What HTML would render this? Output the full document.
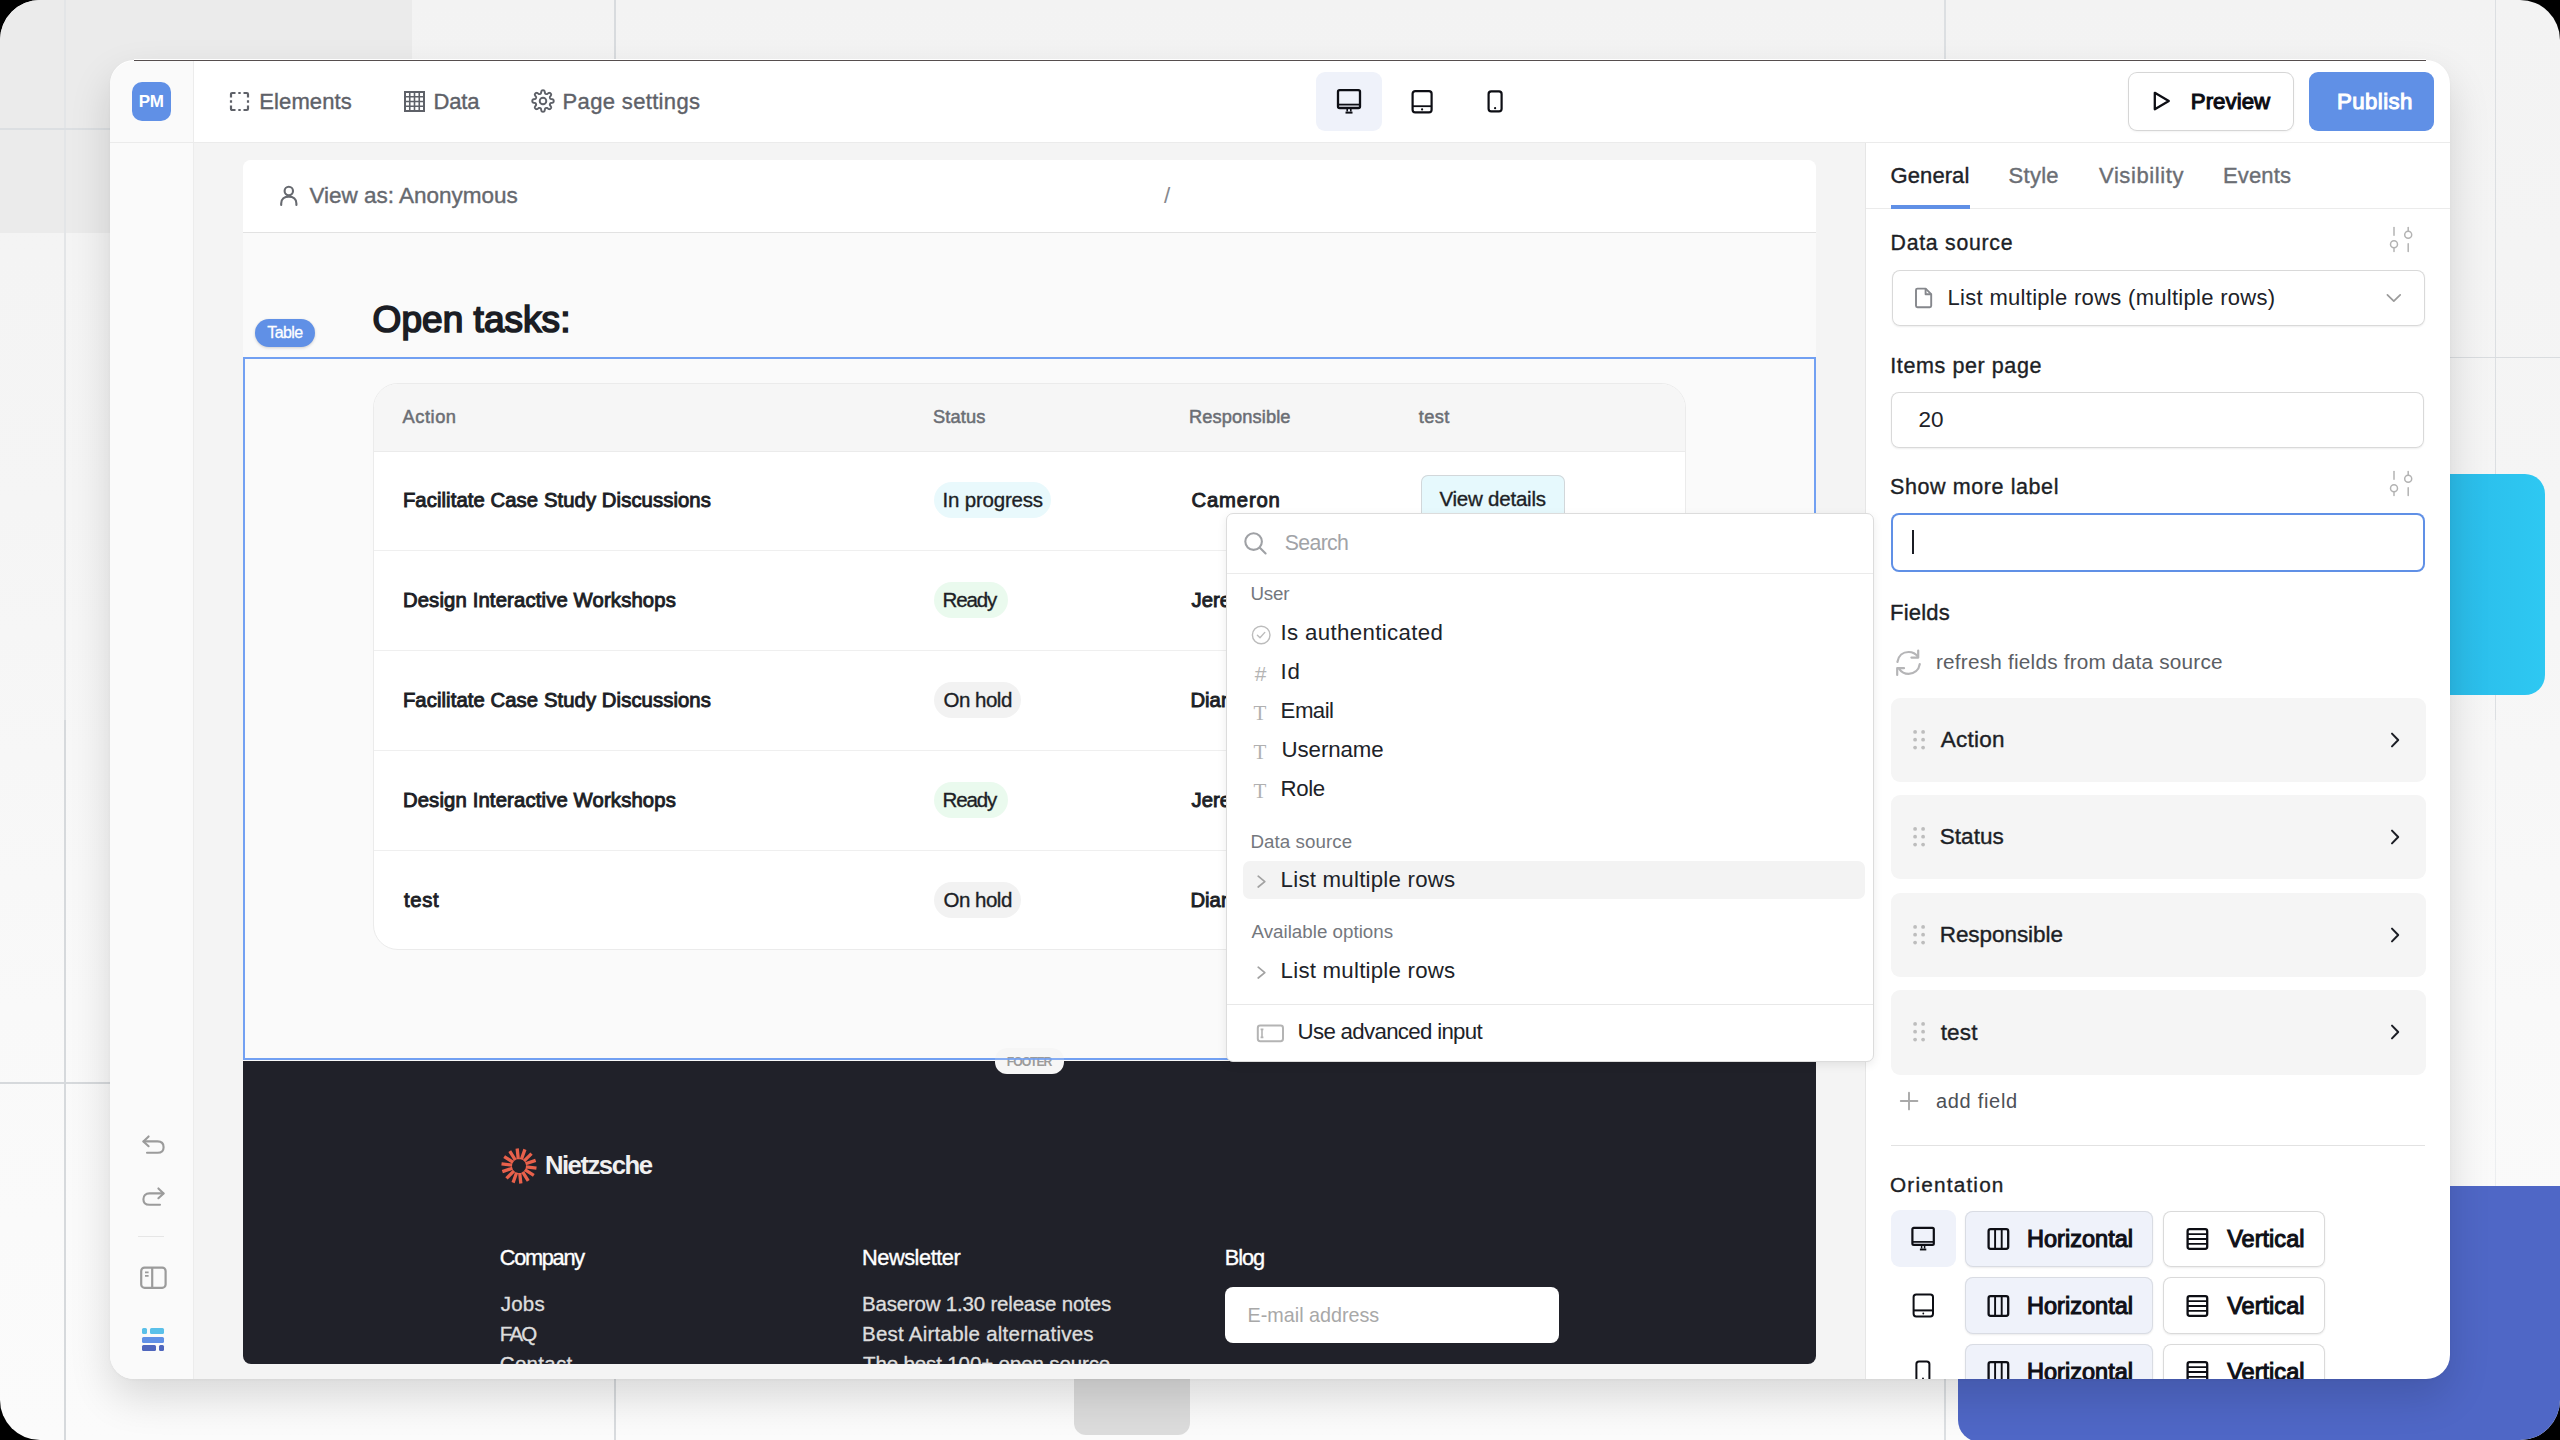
<!DOCTYPE html>
<html><head><meta charset="utf-8"><title>Page editor</title>
<style>html,body{margin:0;padding:0;width:2560px;height:1440px;overflow:hidden;background:#000;font-family:"Liberation Sans",sans-serif;}
#root{position:relative;width:2560px;height:1440px;overflow:hidden;border-radius:40px;}</style></head>
<body><div id="root">
<div style="position:absolute;left:0.00px;top:0.00px;width:2560.00px;height:1440.00px;background:linear-gradient(180deg,#f3f3f3 0%,#f5f5f5 35%,#f9f9f9 70%,#fbfbfb 100%);"></div>
<div style="position:absolute;left:0.00px;top:0.00px;width:412.00px;height:233.00px;background:#ebebeb;"></div>
<div style="position:absolute;left:64.00px;top:0.00px;width:1.50px;height:720.00px;background:#e3e5e7;"></div>
<div style="position:absolute;left:64.00px;top:720.00px;width:1.50px;height:720.00px;background:#d6d9dc;"></div>
<div style="position:absolute;left:614.00px;top:0.00px;width:1.50px;height:1440.00px;background:#d8dbde;"></div>
<div style="position:absolute;left:1944.00px;top:0.00px;width:1.50px;height:1440.00px;background:#dcdfe2;"></div>
<div style="position:absolute;left:2494.50px;top:0.00px;width:1.50px;height:720.00px;background:#dcdfe2;"></div>
<div style="position:absolute;left:2494.50px;top:720.00px;width:1.50px;height:466.00px;background:#eceef0;"></div>
<div style="position:absolute;left:0.00px;top:128.00px;width:412.00px;height:1.50px;background:#dcdfe2;"></div>
<div style="position:absolute;left:0.00px;top:1082.00px;width:412.00px;height:1.50px;background:#d6d9dc;"></div>
<div style="position:absolute;left:2400.00px;top:356.50px;width:160.00px;height:1.50px;background:#d9dcdf;"></div>
<div style="position:absolute;left:2380.00px;top:474.00px;width:165.00px;height:221.00px;background:linear-gradient(90deg,#22a9df,#2bbdea 45%,#2ec8f2);border-radius:20px;"></div>
<div style="position:absolute;left:1958.00px;top:1186.00px;width:642.00px;height:256.00px;background:#4f67c6;border-radius:0 0 0 22px;"></div>
<div style="position:absolute;left:1074.00px;top:1300.00px;width:116.00px;height:135.00px;background:#dcdcdc;border-radius:12px;"></div>
<div style="position:absolute;left:110.00px;top:60.00px;width:2340.00px;height:1319.00px;border-radius:24px;background:#fff;box-shadow:0 18px 42px rgba(0,0,0,0.14),0 1px 3px rgba(0,0,0,0.04);overflow:hidden;">
</div>
<div style="position:absolute;left:134.00px;top:59.00px;width:2292.00px;height:1.00px;background:#ffffff;"></div>
<div style="position:absolute;left:134.00px;top:60.00px;width:2292.00px;height:1.00px;background:#564e4e;"></div>
<div style="position:absolute;left:110px;top:61px;width:83px;height:1318px;background:#fafafa;border-radius:24px 0 0 24px;"></div>
<div style="position:absolute;left:193.00px;top:61.00px;width:1.00px;height:1318.00px;background:#ececec;"></div>
<div style="position:absolute;left:110.00px;top:142.00px;width:2340.00px;height:1.00px;background:#ebebeb;"></div>
<div style="position:absolute;left:194.00px;top:143.00px;width:1671.00px;height:1236.00px;background:#f4f4f4;"></div>
<div style="position:absolute;left:1865.00px;top:143.00px;width:1.00px;height:1236.00px;background:#e6e6e6;"></div>
<div style="position:absolute;left:132.00px;top:82.00px;width:39.00px;height:39.00px;background:#6090e6;border-radius:10px;"></div>
<div style="position:absolute;left:138.70px;top:93.45px;font-family:'Liberation Sans',sans-serif;font-size:17.0px;line-height:17.0px;font-weight:700;color:#fff;white-space:pre;letter-spacing:-0.400px;">PM</div>
<svg style="position:absolute;left:229.00px;top:91.00px;" width="21.00" height="21.00" viewBox="0 0 21.00 21.00" fill="none"><g stroke="#5e6168" stroke-width="2.2" stroke-linecap="butt"><path d="M2,6.5V3.2Q2,2 3.2,2H6.5"/><path d="M14.5,2H17.8Q19,2 19,3.2V6.5"/><path d="M19,14.5V17.8Q19,19 17.8,19H14.5"/><path d="M6.5,19H3.2Q2,19 2,17.8V14.5"/><path d="M9.3,2H11.7"/><path d="M9.3,19H11.7"/><path d="M2,9.3V11.7"/><path d="M19,9.3V11.7"/></g></svg>
<div style="position:absolute;left:259.30px;top:90.70px;font-family:'Liberation Sans',sans-serif;font-size:22.0px;line-height:22.0px;font-weight:400;color:#5e6168;white-space:pre;letter-spacing:0.100px;-webkit-text-stroke:0.374px #5e6168;">Elements</div>
<svg style="position:absolute;left:403.00px;top:90.00px;" width="23.00" height="23.00" viewBox="0 0 23.00 23.00" fill="none"><g stroke="#5e6168" stroke-width="2"><rect x="2" y="2" width="19" height="19"/><path d="M6.75,2V21M11.5,2V21M16.25,2V21M2,6.75H21M2,11.5H21M2,16.25H21" stroke-width="1.6"/></g></svg>
<div style="position:absolute;left:433.60px;top:90.70px;font-family:'Liberation Sans',sans-serif;font-size:22.0px;line-height:22.0px;font-weight:400;color:#5e6168;white-space:pre;letter-spacing:-0.200px;-webkit-text-stroke:0.374px #5e6168;">Data</div>
<svg style="position:absolute;left:530.00px;top:88.00px;" width="26.00" height="26.00" viewBox="0 0 26.00 26.00" fill="none"><path d="M13.00,2.30L13.28,2.31L13.56,2.35L13.83,2.41L14.10,2.54L14.35,2.77L14.56,3.15L14.72,3.70L14.84,4.35L14.94,4.91L15.06,5.29L15.21,5.54L15.37,5.69L15.55,5.81L15.73,5.90L15.91,5.98L16.09,6.05L16.29,6.11L16.49,6.16L16.71,6.16L16.99,6.09L17.35,5.90L17.82,5.58L18.36,5.21L18.86,4.93L19.28,4.81L19.62,4.83L19.90,4.93L20.14,5.07L20.36,5.24L20.57,5.43L20.76,5.64L20.93,5.86L21.07,6.10L21.17,6.38L21.19,6.72L21.07,7.14L20.79,7.64L20.42,8.18L20.10,8.65L19.91,9.01L19.84,9.29L19.84,9.51L19.89,9.71L19.95,9.91L20.02,10.09L20.10,10.27L20.19,10.45L20.31,10.63L20.46,10.79L20.71,10.94L21.09,11.06L21.65,11.16L22.30,11.28L22.85,11.44L23.23,11.65L23.46,11.90L23.59,12.17L23.65,12.44L23.69,12.72L23.70,13.00L23.69,13.28L23.65,13.56L23.59,13.83L23.46,14.10L23.23,14.35L22.85,14.56L22.30,14.72L21.65,14.84L21.09,14.94L20.71,15.06L20.46,15.21L20.31,15.37L20.19,15.55L20.10,15.73L20.02,15.91L19.95,16.09L19.89,16.29L19.84,16.49L19.84,16.71L19.91,16.99L20.10,17.35L20.42,17.82L20.79,18.36L21.07,18.86L21.19,19.28L21.17,19.62L21.07,19.90L20.93,20.14L20.76,20.36L20.57,20.57L20.36,20.76L20.14,20.93L19.90,21.07L19.62,21.17L19.28,21.19L18.86,21.07L18.36,20.79L17.82,20.42L17.35,20.10L16.99,19.91L16.71,19.84L16.49,19.84L16.29,19.89L16.09,19.95L15.91,20.02L15.73,20.10L15.55,20.19L15.37,20.31L15.21,20.46L15.06,20.71L14.94,21.09L14.84,21.65L14.72,22.30L14.56,22.85L14.35,23.23L14.10,23.46L13.83,23.59L13.56,23.65L13.28,23.69L13.00,23.70L12.72,23.69L12.44,23.65L12.17,23.59L11.90,23.46L11.65,23.23L11.44,22.85L11.28,22.30L11.16,21.65L11.06,21.09L10.94,20.71L10.79,20.46L10.63,20.31L10.45,20.19L10.27,20.10L10.09,20.02L9.91,19.95L9.71,19.89L9.51,19.84L9.29,19.84L9.01,19.91L8.65,20.10L8.18,20.42L7.64,20.79L7.14,21.07L6.72,21.19L6.38,21.17L6.10,21.07L5.86,20.93L5.64,20.76L5.43,20.57L5.24,20.36L5.07,20.14L4.93,19.90L4.83,19.62L4.81,19.28L4.93,18.86L5.21,18.36L5.58,17.82L5.90,17.35L6.09,16.99L6.16,16.71L6.16,16.49L6.11,16.29L6.05,16.09L5.98,15.91L5.90,15.73L5.81,15.55L5.69,15.37L5.54,15.21L5.29,15.06L4.91,14.94L4.35,14.84L3.70,14.72L3.15,14.56L2.77,14.35L2.54,14.10L2.41,13.83L2.35,13.56L2.31,13.28L2.30,13.00L2.31,12.72L2.35,12.44L2.41,12.17L2.54,11.90L2.77,11.65L3.15,11.44L3.70,11.28L4.35,11.16L4.91,11.06L5.29,10.94L5.54,10.79L5.69,10.63L5.81,10.45L5.90,10.27L5.98,10.09L6.05,9.91L6.11,9.71L6.16,9.51L6.16,9.29L6.09,9.01L5.90,8.65L5.58,8.18L5.21,7.64L4.93,7.14L4.81,6.72L4.83,6.38L4.93,6.10L5.07,5.86L5.24,5.64L5.43,5.43L5.64,5.24L5.86,5.07L6.10,4.93L6.38,4.83L6.72,4.81L7.14,4.93L7.64,5.21L8.18,5.58L8.65,5.90L9.01,6.09L9.29,6.16L9.51,6.16L9.71,6.11L9.91,6.05L10.09,5.98L10.27,5.90L10.45,5.81L10.63,5.69L10.79,5.54L10.94,5.29L11.06,4.91L11.16,4.35L11.28,3.70L11.44,3.15L11.65,2.77L11.90,2.54L12.17,2.41L12.44,2.35L12.72,2.31Z" stroke="#5e6168" stroke-width="1.9" stroke-linejoin="round"/><circle cx="13" cy="13" r="3.3" stroke="#5e6168" stroke-width="1.9"/></svg>
<div style="position:absolute;left:562.60px;top:90.70px;font-family:'Liberation Sans',sans-serif;font-size:22.0px;line-height:22.0px;font-weight:400;color:#5e6168;white-space:pre;letter-spacing:0.342px;-webkit-text-stroke:0.374px #5e6168;">Page settings</div>
<div style="position:absolute;left:1316.00px;top:72.00px;width:66.00px;height:59.00px;background:#eff2fa;border-radius:9px;"></div>
<svg style="position:absolute;left:1335.00px;top:88.00px;" width="28.00" height="28.00" viewBox="0 0 28.00 28.00" fill="none"><g stroke="#0d0e14" stroke-width="2.3" stroke-linejoin="round"><rect x="3" y="2.2" width="22" height="17.8" rx="1.6"/><path d="M3,16.6H25" stroke-width="1.8"/><path d="M12.2,20V23.5M15.8,20V23.5" stroke-width="1.6"/><path d="M10.5,24.6H17.5" stroke-width="2"/></g></svg>
<svg style="position:absolute;left:1410.00px;top:89.00px;" width="24.00" height="25.00" viewBox="0 0 24.00 25.00" fill="none"><g stroke="#0d0e14" stroke-width="2.2"><rect x="2.6" y="2.1" width="19" height="21.3" rx="2.6"/><path d="M2.6,17.2H21.6" stroke-width="1.8"/></g><circle cx="12.1" cy="20.4" r="1.1" fill="#0d0e14"/></svg>
<svg style="position:absolute;left:1486.00px;top:89.00px;" width="18.00" height="24.00" viewBox="0 0 18.00 24.00" fill="none"><g stroke="#0d0e14" stroke-width="2.2"><rect x="2.6" y="2.4" width="13" height="20" rx="2.6"/></g><circle cx="9.1" cy="19.2" r="1.1" fill="#0d0e14"/></svg>
<div style="position:absolute;left:2128.50px;top:72.50px;width:164.00px;height:57.00px;background:#fff;border-radius:8px;box-shadow:0 0 0 1px #d6d6d6,0 1px 3px rgba(0,0,0,0.10);"></div>
<svg style="position:absolute;left:2151.00px;top:90.00px;" width="22.00" height="22.00" viewBox="0 0 22.00 22.00" fill="none"><path d="M3.8,2.8L17.8,11L3.8,19.2Z" stroke="#0d0e14" stroke-width="2.3" stroke-linejoin="round"/></svg>
<div style="position:absolute;left:2190.80px;top:90.89px;font-family:'Liberation Sans',sans-serif;font-size:22.25px;line-height:22.25px;font-weight:400;color:#0b0c12;white-space:pre;letter-spacing:0.033px;-webkit-text-stroke:1.024px #0b0c12;">Preview</div>
<div style="position:absolute;left:2309.00px;top:72.00px;width:125.00px;height:58.50px;background:#6090e6;border-radius:9px;"></div>
<div style="position:absolute;left:2337.00px;top:90.89px;font-family:'Liberation Sans',sans-serif;font-size:22.25px;line-height:22.25px;font-weight:400;color:#fff;white-space:pre;letter-spacing:0.417px;-webkit-text-stroke:1.024px #fff;">Publish</div>
<div style="position:absolute;left:243.00px;top:160.00px;width:1573.00px;height:1204.00px;background:#fafafa;border-radius:8px;"></div>
<div style="position:absolute;left:243px;top:160px;width:1573px;height:72px;background:#fff;border-radius:8px 8px 0 0;"></div>
<div style="position:absolute;left:243.00px;top:232.00px;width:1573.00px;height:1.00px;background:#e2e2e2;"></div>
<svg style="position:absolute;left:278.00px;top:184.00px;" width="22.00" height="23.00" viewBox="0 0 22.00 23.00" fill="none"><g stroke="#66696f" stroke-width="2.1" stroke-linecap="round"><circle cx="10.8" cy="7" r="4.2"/><path d="M3.2,21V19.4C3.2,14.9 6.4,12.6 10.8,12.6C15.2,12.6 18.4,14.9 18.4,19.4V21"/></g></svg>
<div style="position:absolute;left:309.40px;top:184.78px;font-family:'Liberation Sans',sans-serif;font-size:22.5px;line-height:22.5px;font-weight:400;color:#66696f;white-space:pre;letter-spacing:-0.012px;-webkit-text-stroke:0.383px #66696f;">View as: Anonymous</div>
<div style="position:absolute;left:1164.00px;top:185.18px;font-family:'Liberation Sans',sans-serif;font-size:22.5px;line-height:22.5px;font-weight:400;color:#86888d;white-space:pre;">/</div>
<div style="position:absolute;left:372.60px;top:300.60px;font-family:'Liberation Sans',sans-serif;font-size:37.0px;line-height:37.0px;font-weight:400;color:#1b1d24;white-space:pre;letter-spacing:0.040px;-webkit-text-stroke:1.702px #1b1d24;">Open tasks:</div>
<div style="position:absolute;left:255.00px;top:319.00px;width:60.00px;height:28.00px;background:#6090e6;border-radius:14px;box-shadow:0 1px 3px rgba(0,0,0,0.18);"></div>
<div style="position:absolute;left:267.30px;top:325.30px;font-family:'Liberation Sans',sans-serif;font-size:16.0px;line-height:16.0px;font-weight:400;color:#fff;white-space:pre;letter-spacing:-0.625px;-webkit-text-stroke:0.272px #fff;">Table</div>
<div style="position:absolute;left:243.00px;top:357.00px;width:1573.00px;height:2.00px;background:#72a0f2;"></div>
<div style="position:absolute;left:243.00px;top:357.00px;width:2.00px;height:703.00px;background:#72a0f2;"></div>
<div style="position:absolute;left:1814.00px;top:357.00px;width:2.00px;height:703.00px;background:#72a0f2;"></div>
<div style="position:absolute;left:243.00px;top:1058.00px;width:1573.00px;height:2.00px;background:#72a0f2;"></div>
<div style="position:absolute;left:372.5px;top:382.5px;width:1313.5px;height:567.5px;background:#fff;border:1px solid #ebebeb;box-sizing:border-box;border-radius:25px;overflow:hidden;"><div style="position:absolute;left:0;top:0;right:0;height:67px;background:#f6f6f6;border-bottom:1px solid #ebebeb;"></div></div>
<div style="position:absolute;left:373.50px;top:549.50px;width:1311.50px;height:1.00px;background:#efefef;"></div>
<div style="position:absolute;left:373.50px;top:649.50px;width:1311.50px;height:1.00px;background:#efefef;"></div>
<div style="position:absolute;left:373.50px;top:749.50px;width:1311.50px;height:1.00px;background:#efefef;"></div>
<div style="position:absolute;left:373.50px;top:849.50px;width:1311.50px;height:1.00px;background:#efefef;"></div>
<div style="position:absolute;left:402.50px;top:407.89px;font-family:'Liberation Sans',sans-serif;font-size:18.25px;line-height:18.25px;font-weight:400;color:#6b6e74;white-space:pre;letter-spacing:0.560px;-webkit-text-stroke:0.511px #6b6e74;">Action</div>
<div style="position:absolute;left:933.00px;top:407.89px;font-family:'Liberation Sans',sans-serif;font-size:18.25px;line-height:18.25px;font-weight:400;color:#6b6e74;white-space:pre;letter-spacing:0.120px;-webkit-text-stroke:0.511px #6b6e74;">Status</div>
<div style="position:absolute;left:1189.00px;top:407.89px;font-family:'Liberation Sans',sans-serif;font-size:18.25px;line-height:18.25px;font-weight:400;color:#6b6e74;white-space:pre;letter-spacing:0.100px;-webkit-text-stroke:0.511px #6b6e74;">Responsible</div>
<div style="position:absolute;left:1418.70px;top:407.89px;font-family:'Liberation Sans',sans-serif;font-size:18.25px;line-height:18.25px;font-weight:400;color:#6b6e74;white-space:pre;letter-spacing:0.433px;-webkit-text-stroke:0.511px #6b6e74;">test</div>
<div style="position:absolute;left:402.90px;top:490.09px;font-family:'Liberation Sans',sans-serif;font-size:20.25px;line-height:20.25px;font-weight:400;color:#1d1f26;white-space:pre;letter-spacing:0.091px;-webkit-text-stroke:0.931px #1d1f26;">Facilitate Case Study Discussions</div>
<div style="position:absolute;left:934.00px;top:481.50px;width:117.00px;height:36.10px;background:#e9f9fc;border-radius:18px;"></div>
<div style="position:absolute;left:942.60px;top:489.88px;font-family:'Liberation Sans',sans-serif;font-size:20.5px;line-height:20.5px;font-weight:400;color:#1d1f26;white-space:pre;letter-spacing:-0.220px;-webkit-text-stroke:0.349px #1d1f26;">In progress</div>
<div style="position:absolute;left:1191.50px;top:490.09px;font-family:'Liberation Sans',sans-serif;font-size:20.25px;line-height:20.25px;font-weight:400;color:#1d1f26;white-space:pre;letter-spacing:0.850px;-webkit-text-stroke:0.931px #1d1f26;">Cameron</div>
<div style="position:absolute;left:402.90px;top:590.09px;font-family:'Liberation Sans',sans-serif;font-size:20.25px;line-height:20.25px;font-weight:400;color:#1d1f26;white-space:pre;letter-spacing:0.159px;-webkit-text-stroke:0.931px #1d1f26;">Design Interactive Workshops</div>
<div style="position:absolute;left:934.00px;top:581.50px;width:73.80px;height:36.10px;background:#eafaee;border-radius:18px;"></div>
<div style="position:absolute;left:942.60px;top:589.88px;font-family:'Liberation Sans',sans-serif;font-size:20.5px;line-height:20.5px;font-weight:400;color:#1d1f26;white-space:pre;letter-spacing:-1.150px;-webkit-text-stroke:0.349px #1d1f26;">Ready</div>
<div style="position:absolute;left:1191.50px;top:590.09px;font-family:'Liberation Sans',sans-serif;font-size:20.25px;line-height:20.25px;font-weight:400;color:#1d1f26;white-space:pre;-webkit-text-stroke:0.931px #1d1f26;">Jeremy</div>
<div style="position:absolute;left:402.90px;top:690.09px;font-family:'Liberation Sans',sans-serif;font-size:20.25px;line-height:20.25px;font-weight:400;color:#1d1f26;white-space:pre;letter-spacing:0.091px;-webkit-text-stroke:0.931px #1d1f26;">Facilitate Case Study Discussions</div>
<div style="position:absolute;left:934.00px;top:681.50px;width:86.70px;height:36.10px;background:#f2f2f2;border-radius:18px;"></div>
<div style="position:absolute;left:943.60px;top:689.88px;font-family:'Liberation Sans',sans-serif;font-size:20.5px;line-height:20.5px;font-weight:400;color:#1d1f26;white-space:pre;letter-spacing:-0.517px;-webkit-text-stroke:0.349px #1d1f26;">On hold</div>
<div style="position:absolute;left:1190.50px;top:690.09px;font-family:'Liberation Sans',sans-serif;font-size:20.25px;line-height:20.25px;font-weight:400;color:#1d1f26;white-space:pre;-webkit-text-stroke:0.931px #1d1f26;">Diana</div>
<div style="position:absolute;left:402.90px;top:790.09px;font-family:'Liberation Sans',sans-serif;font-size:20.25px;line-height:20.25px;font-weight:400;color:#1d1f26;white-space:pre;letter-spacing:0.159px;-webkit-text-stroke:0.931px #1d1f26;">Design Interactive Workshops</div>
<div style="position:absolute;left:934.00px;top:781.50px;width:73.80px;height:36.10px;background:#eafaee;border-radius:18px;"></div>
<div style="position:absolute;left:942.60px;top:789.88px;font-family:'Liberation Sans',sans-serif;font-size:20.5px;line-height:20.5px;font-weight:400;color:#1d1f26;white-space:pre;letter-spacing:-1.150px;-webkit-text-stroke:0.349px #1d1f26;">Ready</div>
<div style="position:absolute;left:1191.50px;top:790.09px;font-family:'Liberation Sans',sans-serif;font-size:20.25px;line-height:20.25px;font-weight:400;color:#1d1f26;white-space:pre;-webkit-text-stroke:0.931px #1d1f26;">Jeremy</div>
<div style="position:absolute;left:403.90px;top:890.09px;font-family:'Liberation Sans',sans-serif;font-size:20.25px;line-height:20.25px;font-weight:400;color:#1d1f26;white-space:pre;letter-spacing:0.700px;-webkit-text-stroke:0.931px #1d1f26;">test</div>
<div style="position:absolute;left:934.00px;top:881.50px;width:86.70px;height:36.10px;background:#f2f2f2;border-radius:18px;"></div>
<div style="position:absolute;left:943.60px;top:889.88px;font-family:'Liberation Sans',sans-serif;font-size:20.5px;line-height:20.5px;font-weight:400;color:#1d1f26;white-space:pre;letter-spacing:-0.517px;-webkit-text-stroke:0.349px #1d1f26;">On hold</div>
<div style="position:absolute;left:1190.50px;top:890.09px;font-family:'Liberation Sans',sans-serif;font-size:20.25px;line-height:20.25px;font-weight:400;color:#1d1f26;white-space:pre;-webkit-text-stroke:0.931px #1d1f26;">Diana</div>
<div style="position:absolute;left:1420.70px;top:475.00px;width:144.00px;height:48.00px;background:#e6f9fd;border-radius:7px;box-shadow:inset 0 0 0 1px #d2d7da;"></div>
<div style="position:absolute;left:1439.40px;top:489.38px;font-family:'Liberation Sans',sans-serif;font-size:20.5px;line-height:20.5px;font-weight:400;color:#1d1f26;white-space:pre;letter-spacing:-0.218px;-webkit-text-stroke:0.349px #1d1f26;">View details</div>
<div style="position:absolute;left:243px;top:1061px;width:1573px;height:303px;background:#202129;border-radius:0 0 8px 8px;"></div>
<div style="position:absolute;left:995.20px;top:1048.00px;width:69.00px;height:26.00px;background:#f6f6f6;border-radius:12px;"></div>
<div style="position:absolute;left:1006.80px;top:1056.39px;font-family:'Liberation Sans',sans-serif;font-size:12.25px;line-height:12.25px;font-weight:700;color:#9b9b9b;white-space:pre;letter-spacing:-1.080px;">FOOTER</div>
<div style="position:absolute;left:243.00px;top:1058.00px;width:1573.00px;height:2.00px;background:rgba(114,160,242,0.85);"></div>
<svg style="position:absolute;left:501.00px;top:1148.00px;" width="36.00" height="36.00" viewBox="0 0 36.00 36.00" fill="none"><path d="M24.85,18.83L35.47,20.11M23.81,21.72L32.83,27.48M21.63,23.87L27.25,32.97M18.72,24.86L19.83,35.50M15.67,24.49L12.06,34.57M13.08,22.84L5.46,30.35M11.47,20.23L1.34,23.68M11.15,17.17L0.53,15.89M12.19,14.28L3.17,8.52M14.37,12.13L8.75,3.03M17.28,11.14L16.17,0.50M20.33,11.51L23.94,1.43M22.92,13.16L30.54,5.65M24.53,15.77L34.66,12.32" stroke="#e9614b" stroke-width="3.3" stroke-linecap="butt"/></svg>
<div style="position:absolute;left:544.90px;top:1153.11px;font-family:'Liberation Sans',sans-serif;font-size:25.75px;line-height:25.75px;font-weight:700;color:#f0f0f0;white-space:pre;letter-spacing:-1.513px;">Nietzsche</div>
<div style="position:absolute;left:499.80px;top:1246.51px;font-family:'Liberation Sans',sans-serif;font-size:21.75px;line-height:21.75px;font-weight:400;color:#ffffff;white-space:pre;letter-spacing:-1.300px;-webkit-text-stroke:0.370px #ffffff;">Company</div>
<div style="position:absolute;left:862.00px;top:1246.51px;font-family:'Liberation Sans',sans-serif;font-size:21.75px;line-height:21.75px;font-weight:400;color:#ffffff;white-space:pre;letter-spacing:-0.444px;-webkit-text-stroke:0.370px #ffffff;">Newsletter</div>
<div style="position:absolute;left:1224.80px;top:1246.51px;font-family:'Liberation Sans',sans-serif;font-size:21.75px;line-height:21.75px;font-weight:400;color:#ffffff;white-space:pre;letter-spacing:-1.100px;-webkit-text-stroke:0.370px #ffffff;">Blog</div>
<div style="position:absolute;left:243.00px;top:1061.00px;width:1573.00px;height:303.00px;overflow:hidden;border-radius:0 0 8px 8px;">
</div>
<div style="position:absolute;left:243px;top:1061px;width:1573px;height:303px;overflow:hidden;">
<div style="position:absolute;left:-243px;top:-1061px;width:2560px;height:1440px;">
<div style="position:absolute;left:500.80px;top:1293.58px;font-family:'Liberation Sans',sans-serif;font-size:20.5px;line-height:20.5px;font-weight:400;color:#dddddd;white-space:pre;letter-spacing:0.200px;-webkit-text-stroke:0.349px #dddddd;">Jobs</div>
<div style="position:absolute;left:499.80px;top:1323.88px;font-family:'Liberation Sans',sans-serif;font-size:20.5px;line-height:20.5px;font-weight:400;color:#dddddd;white-space:pre;letter-spacing:-1.750px;-webkit-text-stroke:0.349px #dddddd;">FAQ</div>
<div style="position:absolute;left:499.80px;top:1354.38px;font-family:'Liberation Sans',sans-serif;font-size:20.5px;line-height:20.5px;font-weight:400;color:#dddddd;white-space:pre;letter-spacing:0.300px;-webkit-text-stroke:0.349px #dddddd;">Contact</div>
<div style="position:absolute;left:862.00px;top:1293.58px;font-family:'Liberation Sans',sans-serif;font-size:20.5px;line-height:20.5px;font-weight:400;color:#dddddd;white-space:pre;letter-spacing:-0.200px;-webkit-text-stroke:0.349px #dddddd;">Baserow 1.30 release notes</div>
<div style="position:absolute;left:862.00px;top:1323.88px;font-family:'Liberation Sans',sans-serif;font-size:20.5px;line-height:20.5px;font-weight:400;color:#dddddd;white-space:pre;letter-spacing:0.240px;-webkit-text-stroke:0.349px #dddddd;">Best Airtable alternatives</div>
<div style="position:absolute;left:863.00px;top:1354.38px;font-family:'Liberation Sans',sans-serif;font-size:20.5px;line-height:20.5px;font-weight:400;color:#dddddd;white-space:pre;letter-spacing:-0.125px;-webkit-text-stroke:0.349px #dddddd;">The best 100+ open source</div>
</div></div>
<div style="position:absolute;left:1225.20px;top:1287.00px;width:333.80px;height:56.30px;background:#fff;border-radius:8px;"></div>
<div style="position:absolute;left:1247.60px;top:1306.01px;font-family:'Liberation Sans',sans-serif;font-size:19.75px;line-height:19.75px;font-weight:400;color:#a8a8a8;white-space:pre;letter-spacing:-0.008px;">E-mail address</div>
<div style="position:absolute;left:1225.5px;top:512.8px;width:648px;height:549.2px;background:#fff;border:1px solid #dcdcdc;box-sizing:border-box;border-radius:7px;box-shadow:0 3px 10px rgba(0,0,0,0.08);"></div>
<svg style="position:absolute;left:1242.00px;top:530.00px;" width="28.00" height="26.00" viewBox="0 0 28.00 26.00" fill="none"><g stroke="#9fa1a5" stroke-width="2.1" stroke-linecap="round"><circle cx="11.6" cy="11.6" r="8.3"/><path d="M17.6,17.6L23.6,23.4"/></g></svg>
<div style="position:absolute;left:1284.80px;top:533.14px;font-family:'Liberation Sans',sans-serif;font-size:21.25px;line-height:21.25px;font-weight:400;color:#a1a3a7;white-space:pre;letter-spacing:-0.660px;">Search</div>
<div style="position:absolute;left:1226.50px;top:573.00px;width:646.00px;height:1.00px;background:#ebebeb;"></div>
<div style="position:absolute;left:1250.50px;top:585.26px;font-family:'Liberation Sans',sans-serif;font-size:18.75px;line-height:18.75px;font-weight:400;color:#74777d;white-space:pre;letter-spacing:-0.167px;">User</div>
<svg style="position:absolute;left:1250.00px;top:623.50px;" width="23.00" height="22.00" viewBox="0 0 23.00 22.00" fill="none"><circle cx="11.2" cy="11" r="8.8" stroke="#bcbcbc" stroke-width="1.4"/><path d="M7.4,11.2L10,13.7L14.8,8.4" stroke="#bcbcbc" stroke-width="1.4" stroke-linecap="round" stroke-linejoin="round"/></svg>
<div style="position:absolute;left:1280.60px;top:622.19px;font-family:'Liberation Sans',sans-serif;font-size:22.25px;line-height:22.25px;font-weight:400;color:#202228;white-space:pre;letter-spacing:0.340px;">Is authenticated</div>
<div style="position:absolute;left:1254.80px;top:663.45px;font-family:'Liberation Sans',sans-serif;font-size:21.0px;line-height:21.0px;font-weight:400;color:#b4b4b4;white-space:pre;">#</div>
<div style="position:absolute;left:1280.60px;top:661.19px;font-family:'Liberation Sans',sans-serif;font-size:22.25px;line-height:22.25px;font-weight:400;color:#202228;white-space:pre;letter-spacing:0.800px;">Id</div>
<div style="position:absolute;left:1253.50px;top:702.95px;font-family:'Liberation Serif',sans-serif;font-size:21.0px;line-height:21.0px;font-weight:400;color:#b0b0b0;white-space:pre;">T</div>
<div style="position:absolute;left:1280.60px;top:700.39px;font-family:'Liberation Sans',sans-serif;font-size:22.25px;line-height:22.25px;font-weight:400;color:#202228;white-space:pre;letter-spacing:-0.550px;">Email</div>
<div style="position:absolute;left:1253.50px;top:741.75px;font-family:'Liberation Serif',sans-serif;font-size:21.0px;line-height:21.0px;font-weight:400;color:#b0b0b0;white-space:pre;">T</div>
<div style="position:absolute;left:1281.60px;top:739.19px;font-family:'Liberation Sans',sans-serif;font-size:22.25px;line-height:22.25px;font-weight:400;color:#202228;white-space:pre;letter-spacing:-0.086px;">Username</div>
<div style="position:absolute;left:1253.50px;top:780.75px;font-family:'Liberation Serif',sans-serif;font-size:21.0px;line-height:21.0px;font-weight:400;color:#b0b0b0;white-space:pre;">T</div>
<div style="position:absolute;left:1280.60px;top:778.19px;font-family:'Liberation Sans',sans-serif;font-size:22.25px;line-height:22.25px;font-weight:400;color:#202228;white-space:pre;letter-spacing:-0.400px;">Role</div>
<div style="position:absolute;left:1250.50px;top:832.76px;font-family:'Liberation Sans',sans-serif;font-size:18.75px;line-height:18.75px;font-weight:400;color:#74777d;white-space:pre;letter-spacing:0.050px;">Data source</div>
<div style="position:absolute;left:1242.70px;top:860.80px;width:622.30px;height:38.20px;background:#f3f3f3;border-radius:7px;"></div>
<svg style="position:absolute;left:1254.00px;top:873.00px;" width="15.00" height="17.00" viewBox="0 0 15.00 17.00" fill="none"><path d="M4.2,3.2L10.8,8.6L4.2,14" stroke="#a2a2a2" stroke-width="1.7" stroke-linecap="round" stroke-linejoin="round"/></svg>
<div style="position:absolute;left:1280.60px;top:868.69px;font-family:'Liberation Sans',sans-serif;font-size:22.25px;line-height:22.25px;font-weight:400;color:#202228;white-space:pre;letter-spacing:0.235px;">List multiple rows</div>
<div style="position:absolute;left:1251.50px;top:922.86px;font-family:'Liberation Sans',sans-serif;font-size:18.75px;line-height:18.75px;font-weight:400;color:#74777d;white-space:pre;letter-spacing:0.013px;">Available options</div>
<svg style="position:absolute;left:1254.00px;top:964.00px;" width="15.00" height="17.00" viewBox="0 0 15.00 17.00" fill="none"><path d="M4.2,3.2L10.8,8.6L4.2,14" stroke="#a2a2a2" stroke-width="1.7" stroke-linecap="round" stroke-linejoin="round"/></svg>
<div style="position:absolute;left:1280.60px;top:959.69px;font-family:'Liberation Sans',sans-serif;font-size:22.25px;line-height:22.25px;font-weight:400;color:#202228;white-space:pre;letter-spacing:0.235px;">List multiple rows</div>
<div style="position:absolute;left:1226.50px;top:1003.50px;width:646.00px;height:1.00px;background:#e8e8e8;"></div>
<svg style="position:absolute;left:1255.00px;top:1023.00px;" width="30.00" height="21.00" viewBox="0 0 30.00 21.00" fill="none"><rect x="2.8" y="2.6" width="25.2" height="15.6" rx="2.4" stroke="#b4b4b4" stroke-width="2"/><path d="M7,6.4V14.4M5.6,6.4H8.4M5.6,14.4H8.4" stroke="#b4b4b4" stroke-width="1.6"/></svg>
<div style="position:absolute;left:1297.60px;top:1021.29px;font-family:'Liberation Sans',sans-serif;font-size:22.25px;line-height:22.25px;font-weight:400;color:#202228;white-space:pre;letter-spacing:-0.682px;">Use advanced input</div>
<div style="position:absolute;left:1890.60px;top:165.00px;font-family:'Liberation Sans',sans-serif;font-size:22.0px;line-height:22.0px;font-weight:400;color:#202228;white-space:pre;letter-spacing:0.067px;-webkit-text-stroke:0.374px #202228;">General</div>
<div style="position:absolute;left:2008.50px;top:165.00px;font-family:'Liberation Sans',sans-serif;font-size:22.0px;line-height:22.0px;font-weight:400;color:#6b6e74;white-space:pre;letter-spacing:0.300px;-webkit-text-stroke:0.374px #6b6e74;">Style</div>
<div style="position:absolute;left:2099.00px;top:165.00px;font-family:'Liberation Sans',sans-serif;font-size:22.0px;line-height:22.0px;font-weight:400;color:#6b6e74;white-space:pre;letter-spacing:0.600px;-webkit-text-stroke:0.374px #6b6e74;">Visibility</div>
<div style="position:absolute;left:2223.00px;top:165.00px;font-family:'Liberation Sans',sans-serif;font-size:22.0px;line-height:22.0px;font-weight:400;color:#6b6e74;white-space:pre;letter-spacing:0.140px;-webkit-text-stroke:0.374px #6b6e74;">Events</div>
<div style="position:absolute;left:1866.00px;top:207.50px;width:584.00px;height:1.00px;background:#ebebeb;"></div>
<div style="position:absolute;left:1891.00px;top:205.00px;width:79.00px;height:3.50px;background:#6090e6;"></div>
<div style="position:absolute;left:1890.60px;top:233.34px;font-family:'Liberation Sans',sans-serif;font-size:21.25px;line-height:21.25px;font-weight:400;color:#1d1f26;white-space:pre;letter-spacing:0.730px;-webkit-text-stroke:0.361px #1d1f26;">Data source</div>
<svg style="position:absolute;left:2386.00px;top:224.00px;" width="30.00" height="30.00" viewBox="0 0 30.00 30.00" fill="none"><g stroke="#b3b3b3" stroke-width="1.5" stroke-linecap="round"><path d="M8,3.6V11.2"/><circle cx="8" cy="20.2" r="3.5"/><path d="M8,23.7V27.4"/><path d="M22.2,3.6V7.2"/><circle cx="22.2" cy="10.7" r="3.5"/><path d="M22.2,19.8V27.4"/></g></svg>
<div style="position:absolute;left:1891.60px;top:269.60px;width:533.20px;height:56.70px;background:#fff;border-radius:8px;box-shadow:inset 0 0 0 1px #d9d9d9,0 1px 2px rgba(0,0,0,0.07);"></div>
<svg style="position:absolute;left:1912.00px;top:285.00px;" width="23.00" height="26.00" viewBox="0 0 23.00 26.00" fill="none"><path d="M5.4,3.6H13.6L19.2,9.2V20.8Q19.2,22.2 17.8,22.2H5.4Q4,22.2 4,20.8V5Q4,3.6 5.4,3.6Z" stroke="#85878c" stroke-width="1.9" stroke-linejoin="round"/><path d="M13.6,3.6V9.2H19.2" stroke="#85878c" stroke-width="1.9" stroke-linejoin="round"/></svg>
<div style="position:absolute;left:1947.60px;top:287.30px;font-family:'Liberation Sans',sans-serif;font-size:22.0px;line-height:22.0px;font-weight:400;color:#202228;white-space:pre;letter-spacing:0.294px;">List multiple rows (multiple rows)</div>
<svg style="position:absolute;left:2384.00px;top:291.00px;" width="20.00" height="14.00" viewBox="0 0 20.00 14.00" fill="none"><path d="M3.4,3.8L9.8,10.2L16.2,3.8" stroke="#9b9b9b" stroke-width="1.7" stroke-linecap="round" stroke-linejoin="round"/></svg>
<div style="position:absolute;left:1890.30px;top:355.73px;font-family:'Liberation Sans',sans-serif;font-size:21.5px;line-height:21.5px;font-weight:400;color:#1d1f26;white-space:pre;letter-spacing:0.592px;-webkit-text-stroke:0.366px #1d1f26;">Items per page</div>
<div style="position:absolute;left:1891.30px;top:391.70px;width:533.20px;height:56.50px;background:#fff;border-radius:8px;box-shadow:inset 0 0 0 1px #d9d9d9,0 1px 2px rgba(0,0,0,0.07);"></div>
<div style="position:absolute;left:1918.60px;top:409.28px;font-family:'Liberation Sans',sans-serif;font-size:22.5px;line-height:22.5px;font-weight:400;color:#202228;white-space:pre;letter-spacing:-0.100px;">20</div>
<div style="position:absolute;left:1890.00px;top:476.93px;font-family:'Liberation Sans',sans-serif;font-size:21.5px;line-height:21.5px;font-weight:400;color:#1d1f26;white-space:pre;letter-spacing:0.593px;-webkit-text-stroke:0.366px #1d1f26;">Show more label</div>
<svg style="position:absolute;left:2386.00px;top:468.00px;" width="30.00" height="30.00" viewBox="0 0 30.00 30.00" fill="none"><g stroke="#b3b3b3" stroke-width="1.5" stroke-linecap="round"><path d="M8,3.6V11.2"/><circle cx="8" cy="20.2" r="3.5"/><path d="M8,23.7V27.4"/><path d="M22.2,3.6V7.2"/><circle cx="22.2" cy="10.7" r="3.5"/><path d="M22.2,19.8V27.4"/></g></svg>
<div style="position:absolute;left:1891.00px;top:513.20px;width:533.50px;height:58.80px;background:#fff;border-radius:8px;box-shadow:inset 0 0 0 2px #6090e6;"></div>
<div style="position:absolute;left:1911.80px;top:530.00px;width:1.80px;height:24.00px;background:#1b1d24;"></div>
<div style="position:absolute;left:1890.00px;top:601.90px;font-family:'Liberation Sans',sans-serif;font-size:22.0px;line-height:22.0px;font-weight:400;color:#1d1f26;white-space:pre;letter-spacing:0.200px;-webkit-text-stroke:0.374px #1d1f26;">Fields</div>
<svg style="position:absolute;left:1893.00px;top:647.00px;" width="32.00" height="31.00" viewBox="0 0 32.00 31.00" fill="none"><g stroke="#b5b5b7" stroke-width="2.2" stroke-linecap="round" stroke-linejoin="round"><path d="M4.4,15C5.4,8.6 10,5 15.6,5C19.6,5 23,7 25,10"/><path d="M25.2,3.6V10.6H18.4"/><path d="M26.8,17C25.8,23.2 21.2,26.8 15.6,26.8C11.6,26.8 8.2,24.8 6.2,21.8"/><path d="M4.2,28V21.2H11"/></g></svg>
<div style="position:absolute;left:1936.00px;top:651.76px;font-family:'Liberation Sans',sans-serif;font-size:20.75px;line-height:20.75px;font-weight:400;color:#5b5e64;white-space:pre;letter-spacing:0.210px;">refresh fields from data source</div>
<div style="position:absolute;left:1891.00px;top:697.70px;width:534.50px;height:84.30px;background:#f5f5f5;border-radius:9px;"></div>
<svg style="position:absolute;left:1911.50px;top:728.70px;" width="15.00" height="22.00" viewBox="0 0 15.00 22.00" fill="none"><circle cx="3.1" cy="2.9" r="1.9" fill="#bdbdbd"/><circle cx="3.1" cy="10.7" r="1.9" fill="#bdbdbd"/><circle cx="3.1" cy="18.6" r="1.9" fill="#bdbdbd"/><circle cx="11.1" cy="2.9" r="1.9" fill="#bdbdbd"/><circle cx="11.1" cy="10.7" r="1.9" fill="#bdbdbd"/><circle cx="11.1" cy="18.6" r="1.9" fill="#bdbdbd"/></svg>
<div style="position:absolute;left:1940.70px;top:729.17px;font-family:'Liberation Sans',sans-serif;font-size:22.5px;line-height:22.5px;font-weight:400;color:#1d1f26;white-space:pre;letter-spacing:0.260px;-webkit-text-stroke:0.383px #1d1f26;">Action</div>
<svg style="position:absolute;left:2387.00px;top:729.70px;" width="16.00" height="20.00" viewBox="0 0 16.00 20.00" fill="none"><path d="M5,3.6L11.2,10L5,16.4" stroke="#1b1d24" stroke-width="2" stroke-linecap="round" stroke-linejoin="round"/></svg>
<div style="position:absolute;left:1891.00px;top:795.00px;width:534.50px;height:84.30px;background:#f5f5f5;border-radius:9px;"></div>
<svg style="position:absolute;left:1911.50px;top:826.00px;" width="15.00" height="22.00" viewBox="0 0 15.00 22.00" fill="none"><circle cx="3.1" cy="2.9" r="1.9" fill="#bdbdbd"/><circle cx="3.1" cy="10.7" r="1.9" fill="#bdbdbd"/><circle cx="3.1" cy="18.6" r="1.9" fill="#bdbdbd"/><circle cx="11.1" cy="2.9" r="1.9" fill="#bdbdbd"/><circle cx="11.1" cy="10.7" r="1.9" fill="#bdbdbd"/><circle cx="11.1" cy="18.6" r="1.9" fill="#bdbdbd"/></svg>
<div style="position:absolute;left:1939.70px;top:826.47px;font-family:'Liberation Sans',sans-serif;font-size:22.5px;line-height:22.5px;font-weight:400;color:#1d1f26;white-space:pre;letter-spacing:0.080px;-webkit-text-stroke:0.383px #1d1f26;">Status</div>
<svg style="position:absolute;left:2387.00px;top:827.00px;" width="16.00" height="20.00" viewBox="0 0 16.00 20.00" fill="none"><path d="M5,3.6L11.2,10L5,16.4" stroke="#1b1d24" stroke-width="2" stroke-linecap="round" stroke-linejoin="round"/></svg>
<div style="position:absolute;left:1891.00px;top:893.00px;width:534.50px;height:84.30px;background:#f5f5f5;border-radius:9px;"></div>
<svg style="position:absolute;left:1911.50px;top:924.00px;" width="15.00" height="22.00" viewBox="0 0 15.00 22.00" fill="none"><circle cx="3.1" cy="2.9" r="1.9" fill="#bdbdbd"/><circle cx="3.1" cy="10.7" r="1.9" fill="#bdbdbd"/><circle cx="3.1" cy="18.6" r="1.9" fill="#bdbdbd"/><circle cx="11.1" cy="2.9" r="1.9" fill="#bdbdbd"/><circle cx="11.1" cy="10.7" r="1.9" fill="#bdbdbd"/><circle cx="11.1" cy="18.6" r="1.9" fill="#bdbdbd"/></svg>
<div style="position:absolute;left:1939.70px;top:924.47px;font-family:'Liberation Sans',sans-serif;font-size:22.5px;line-height:22.5px;font-weight:400;color:#1d1f26;white-space:pre;letter-spacing:-0.060px;-webkit-text-stroke:0.383px #1d1f26;">Responsible</div>
<svg style="position:absolute;left:2387.00px;top:925.00px;" width="16.00" height="20.00" viewBox="0 0 16.00 20.00" fill="none"><path d="M5,3.6L11.2,10L5,16.4" stroke="#1b1d24" stroke-width="2" stroke-linecap="round" stroke-linejoin="round"/></svg>
<div style="position:absolute;left:1891.00px;top:990.40px;width:534.50px;height:84.30px;background:#f5f5f5;border-radius:9px;"></div>
<svg style="position:absolute;left:1911.50px;top:1021.40px;" width="15.00" height="22.00" viewBox="0 0 15.00 22.00" fill="none"><circle cx="3.1" cy="2.9" r="1.9" fill="#bdbdbd"/><circle cx="3.1" cy="10.7" r="1.9" fill="#bdbdbd"/><circle cx="3.1" cy="18.6" r="1.9" fill="#bdbdbd"/><circle cx="11.1" cy="2.9" r="1.9" fill="#bdbdbd"/><circle cx="11.1" cy="10.7" r="1.9" fill="#bdbdbd"/><circle cx="11.1" cy="18.6" r="1.9" fill="#bdbdbd"/></svg>
<div style="position:absolute;left:1940.70px;top:1021.88px;font-family:'Liberation Sans',sans-serif;font-size:22.5px;line-height:22.5px;font-weight:400;color:#1d1f26;white-space:pre;letter-spacing:0.167px;-webkit-text-stroke:0.383px #1d1f26;">test</div>
<svg style="position:absolute;left:2387.00px;top:1022.40px;" width="16.00" height="20.00" viewBox="0 0 16.00 20.00" fill="none"><path d="M5,3.6L11.2,10L5,16.4" stroke="#1b1d24" stroke-width="2" stroke-linecap="round" stroke-linejoin="round"/></svg>
<svg style="position:absolute;left:1898.00px;top:1090.00px;" width="22.00" height="22.00" viewBox="0 0 22.00 22.00" fill="none"><path d="M11,2.8V19.4M2.8,11H19.4" stroke="#a9a9a9" stroke-width="1.9" stroke-linecap="round"/></svg>
<div style="position:absolute;left:1935.90px;top:1090.80px;font-family:'Liberation Sans',sans-serif;font-size:20.0px;line-height:20.0px;font-weight:400;color:#4d5056;white-space:pre;letter-spacing:0.712px;">add field</div>
<div style="position:absolute;left:1891.00px;top:1144.70px;width:534.00px;height:1.00px;background:#e2e2e2;"></div>
<div style="position:absolute;left:1890.00px;top:1174.86px;font-family:'Liberation Sans',sans-serif;font-size:20.75px;line-height:20.75px;font-weight:400;color:#1d1f26;white-space:pre;letter-spacing:1.190px;-webkit-text-stroke:0.353px #1d1f26;">Orientation</div>
<div style="position:absolute;left:1866px;top:1200px;width:584px;height:179px;overflow:hidden;">
<div style="position:absolute;left:-1866px;top:-1200px;width:2560px;height:1440px;">
<div style="position:absolute;left:1891.30px;top:1210.00px;width:64.60px;height:57.30px;background:#eff2fa;border-radius:9px;"></div>
<div style="position:absolute;left:1965.00px;top:1210.50px;width:188.40px;height:56.80px;background:#eff2fa;border-radius:8px;box-shadow:inset 0 0 0 1px #d9dce3,0 1px 2px rgba(0,0,0,0.08);"></div>
<div style="position:absolute;left:2163.20px;top:1210.50px;width:161.60px;height:56.80px;background:#fff;border-radius:8px;box-shadow:inset 0 0 0 1px #dadada,0 1px 2px rgba(0,0,0,0.08);"></div>
<svg style="position:absolute;left:1985.00px;top:1226.00px;" width="26.00" height="26.00" viewBox="0 0 26.00 26.00" fill="none"><g stroke="#0d0e14" stroke-width="2.3" stroke-linejoin="round"><rect x="3.6" y="3.2" width="19.6" height="19.6" rx="2"/><path d="M10.1,3.2V22.8M16.7,3.2V22.8" stroke-width="1.9"/></g></svg>
<div style="position:absolute;left:2027.00px;top:1228.03px;font-family:'Liberation Sans',sans-serif;font-size:23.5px;line-height:23.5px;font-weight:400;color:#0f1017;white-space:pre;letter-spacing:0.033px;-webkit-text-stroke:1.081px #0f1017;">Horizontal</div>
<svg style="position:absolute;left:2183.50px;top:1226.00px;" width="26.00" height="26.00" viewBox="0 0 26.00 26.00" fill="none"><g stroke="#0d0e14" stroke-width="2.3" stroke-linejoin="round"><rect x="3.6" y="3.2" width="19.6" height="19.6" rx="2"/><path d="M3.6,8.1H23.2M3.6,13H23.2M3.6,17.9H23.2" stroke-width="1.9"/></g></svg>
<div style="position:absolute;left:2227.20px;top:1228.03px;font-family:'Liberation Sans',sans-serif;font-size:23.5px;line-height:23.5px;font-weight:400;color:#0f1017;white-space:pre;letter-spacing:0.029px;-webkit-text-stroke:1.081px #0f1017;">Vertical</div>
<div style="position:absolute;left:1965.00px;top:1277.20px;width:188.40px;height:56.80px;background:#eff2fa;border-radius:8px;box-shadow:inset 0 0 0 1px #d9dce3,0 1px 2px rgba(0,0,0,0.08);"></div>
<div style="position:absolute;left:2163.20px;top:1277.20px;width:161.60px;height:56.80px;background:#fff;border-radius:8px;box-shadow:inset 0 0 0 1px #dadada,0 1px 2px rgba(0,0,0,0.08);"></div>
<svg style="position:absolute;left:1985.00px;top:1292.70px;" width="26.00" height="26.00" viewBox="0 0 26.00 26.00" fill="none"><g stroke="#0d0e14" stroke-width="2.3" stroke-linejoin="round"><rect x="3.6" y="3.2" width="19.6" height="19.6" rx="2"/><path d="M10.1,3.2V22.8M16.7,3.2V22.8" stroke-width="1.9"/></g></svg>
<div style="position:absolute;left:2027.00px;top:1294.73px;font-family:'Liberation Sans',sans-serif;font-size:23.5px;line-height:23.5px;font-weight:400;color:#0f1017;white-space:pre;letter-spacing:0.033px;-webkit-text-stroke:1.081px #0f1017;">Horizontal</div>
<svg style="position:absolute;left:2183.50px;top:1292.70px;" width="26.00" height="26.00" viewBox="0 0 26.00 26.00" fill="none"><g stroke="#0d0e14" stroke-width="2.3" stroke-linejoin="round"><rect x="3.6" y="3.2" width="19.6" height="19.6" rx="2"/><path d="M3.6,8.1H23.2M3.6,13H23.2M3.6,17.9H23.2" stroke-width="1.9"/></g></svg>
<div style="position:absolute;left:2227.20px;top:1294.73px;font-family:'Liberation Sans',sans-serif;font-size:23.5px;line-height:23.5px;font-weight:400;color:#0f1017;white-space:pre;letter-spacing:0.029px;-webkit-text-stroke:1.081px #0f1017;">Vertical</div>
<div style="position:absolute;left:1965.00px;top:1343.60px;width:188.40px;height:56.80px;background:#eff2fa;border-radius:8px;box-shadow:inset 0 0 0 1px #d9dce3,0 1px 2px rgba(0,0,0,0.08);"></div>
<div style="position:absolute;left:2163.20px;top:1343.60px;width:161.60px;height:56.80px;background:#fff;border-radius:8px;box-shadow:inset 0 0 0 1px #dadada,0 1px 2px rgba(0,0,0,0.08);"></div>
<svg style="position:absolute;left:1985.00px;top:1359.10px;" width="26.00" height="26.00" viewBox="0 0 26.00 26.00" fill="none"><g stroke="#0d0e14" stroke-width="2.3" stroke-linejoin="round"><rect x="3.6" y="3.2" width="19.6" height="19.6" rx="2"/><path d="M10.1,3.2V22.8M16.7,3.2V22.8" stroke-width="1.9"/></g></svg>
<div style="position:absolute;left:2027.00px;top:1361.12px;font-family:'Liberation Sans',sans-serif;font-size:23.5px;line-height:23.5px;font-weight:400;color:#0f1017;white-space:pre;letter-spacing:0.033px;-webkit-text-stroke:1.081px #0f1017;">Horizontal</div>
<svg style="position:absolute;left:2183.50px;top:1359.10px;" width="26.00" height="26.00" viewBox="0 0 26.00 26.00" fill="none"><g stroke="#0d0e14" stroke-width="2.3" stroke-linejoin="round"><rect x="3.6" y="3.2" width="19.6" height="19.6" rx="2"/><path d="M3.6,8.1H23.2M3.6,13H23.2M3.6,17.9H23.2" stroke-width="1.9"/></g></svg>
<div style="position:absolute;left:2227.20px;top:1361.12px;font-family:'Liberation Sans',sans-serif;font-size:23.5px;line-height:23.5px;font-weight:400;color:#0f1017;white-space:pre;letter-spacing:0.029px;-webkit-text-stroke:1.081px #0f1017;">Vertical</div>
<svg style="position:absolute;left:1909.00px;top:1225.00px;" width="29.00" height="28.00" viewBox="0 0 29.00 28.00" fill="none"><g stroke="#0d0e14" stroke-width="2.2" stroke-linejoin="round"><rect x="3.4" y="2.8" width="21.4" height="17" rx="1.4"/><path d="M3.4,16.9H24.8" stroke-width="1.7"/><path d="M12.6,19.8V23.4M15.6,19.8V23.4" stroke-width="1.5"/><path d="M10.9,24.5H17.3" stroke-width="1.9"/></g></svg>
<svg style="position:absolute;left:1911.00px;top:1292.00px;" width="25.00" height="27.00" viewBox="0 0 25.00 27.00" fill="none"><g stroke="#0d0e14" stroke-width="2" ><rect x="2.6" y="2.4" width="19.4" height="22" rx="2.6"/><path d="M2.6,18.4H22"/></g><circle cx="12.3" cy="21.5" r="0.9" fill="#0d0e14"/></svg>
<svg style="position:absolute;left:1914.00px;top:1359.00px;" width="19.00" height="30.00" viewBox="0 0 19.00 30.00" fill="none"><g stroke="#0d0e14" stroke-width="2"><rect x="2.4" y="2.4" width="13" height="20" rx="2.6"/></g><circle cx="9" cy="19.5" r="0.9" fill="#0d0e14"/></svg>
</div></div>
<svg style="position:absolute;left:140.00px;top:1133.00px;" width="27.00" height="24.00" viewBox="0 0 27.00 24.00" fill="none"><g stroke="#9b9b9b" stroke-width="2.1" stroke-linecap="round" stroke-linejoin="round"><path d="M8.6,3.4L3.4,8.4L8.6,13.2"/><path d="M3.6,8.4H17.6C21.4,8.4 23.6,10.8 23.6,14.2C23.6,17.6 21.4,19.8 17.6,19.8H7"/></g></svg>
<svg style="position:absolute;left:140.00px;top:1185.00px;" width="27.00" height="24.00" viewBox="0 0 27.00 24.00" fill="none"><g stroke="#9b9b9b" stroke-width="2.1" stroke-linecap="round" stroke-linejoin="round"><path d="M18.4,3.4L23.6,8.4L18.4,13.2"/><path d="M23.4,8.4H9.4C5.6,8.4 3.4,10.8 3.4,14.2C3.4,17.6 5.6,19.8 9.4,19.8H20"/></g></svg>
<div style="position:absolute;left:138.00px;top:1236.00px;width:26.40px;height:1.00px;background:#e6e6e6;"></div>
<svg style="position:absolute;left:138.00px;top:1264.00px;" width="30.00" height="28.00" viewBox="0 0 30.00 28.00" fill="none"><g stroke="#9b9b9b" stroke-width="2.2"><rect x="3.2" y="3.6" width="24.4" height="20.2" rx="3.4"/><path d="M14.2,3.6V23.8"/><path d="M7,8.4H10.6M7,11.8H10.6" stroke-width="1.8"/></g></svg>
<div style="position:absolute;left:141.80px;top:1328.20px;width:5.60px;height:5.80px;background:#5ac0e9;border-radius:1.5px;"></div>
<div style="position:absolute;left:150.40px;top:1328.20px;width:14.00px;height:5.80px;background:#5ac0e9;border-radius:1.5px;"></div>
<div style="position:absolute;left:141.80px;top:1336.80px;width:22.60px;height:5.80px;background:#6090e6;border-radius:1.5px;"></div>
<div style="position:absolute;left:141.80px;top:1345.20px;width:13.90px;height:5.70px;background:#4f66bd;border-radius:1.5px;"></div>
<div style="position:absolute;left:159.00px;top:1345.20px;width:5.40px;height:5.70px;background:#4f66bd;border-radius:1.5px;"></div>
</div></body></html>
